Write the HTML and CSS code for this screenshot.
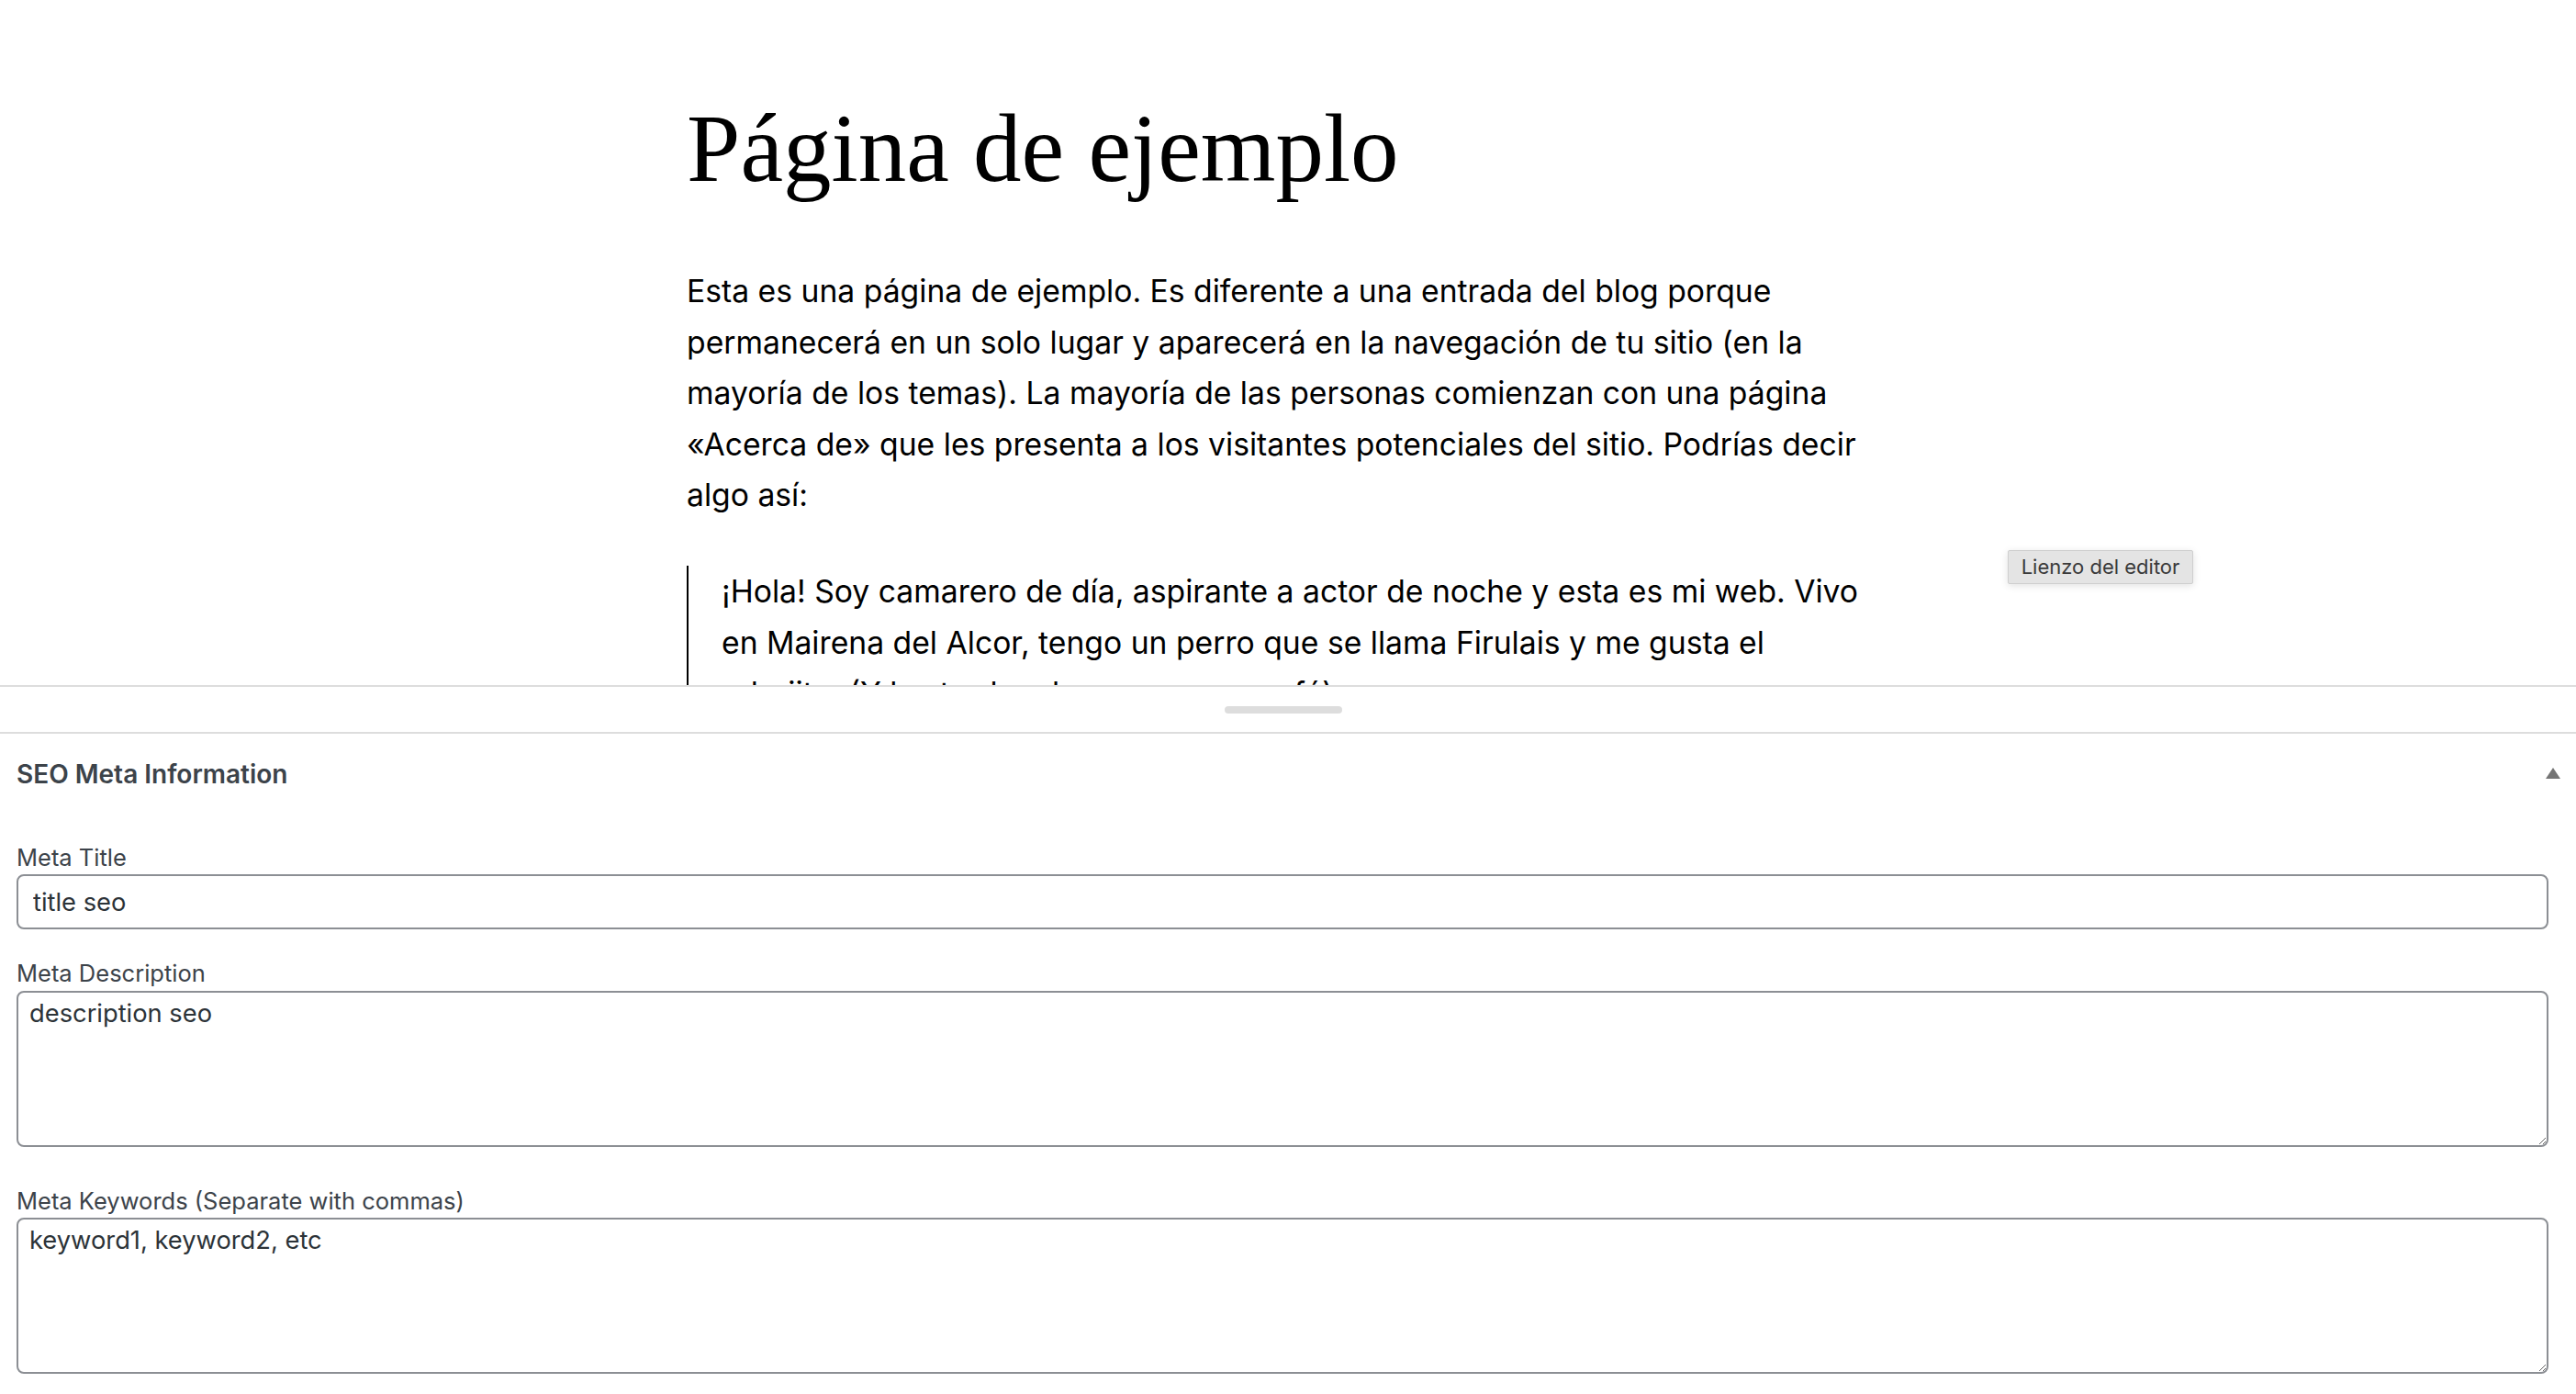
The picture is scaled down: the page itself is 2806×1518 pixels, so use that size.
FILE: index.html
```html
<!DOCTYPE html>
<html lang="es">
<head>
<meta charset="utf-8">
<title>Página de ejemplo</title>
<link rel="stylesheet" href="styles.css">
</head>
<body>
<div class="editor-canvas">
  <article class="post">
    <h1 class="post-title">Página de ejemplo</h1>
    <p class="post-text">Esta es una página de ejemplo. Es diferente a una entrada del blog porque permanecerá en un solo lugar y aparecerá en la navegación de tu sitio (en la mayoría de los temas). La mayoría de las personas comienzan con una página «Acerca de» que les presenta a los visitantes potenciales del sitio. Podrías decir algo así:</p>
    <blockquote class="post-quote">
      <p>¡Hola! Soy camarero de día, aspirante a actor de noche y esta es mi web. Vivo en Mairena del Alcor, tengo un perro que se llama Firulais y me gusta el rebujito. (Y las tardes de verano con café)</p>
    </blockquote>
  </article>
  <div class="tooltip">Lienzo del editor</div>
</div>
<div class="resize-bar"><span class="resize-handle"></span></div>
<section class="metabox">
  <div class="metabox-header">
    <h2 class="metabox-title">SEO Meta Information</h2>
    <span class="toggle-arrow"></span>
  </div>
  <div class="field">
    <label class="field-label" for="meta-title">Meta Title</label>
    <input class="field-input" id="meta-title" type="text" value="title seo">
  </div>
  <div class="field field-area">
    <label class="field-label" for="meta-desc">Meta Description</label>
    <textarea class="field-textarea" id="meta-desc">description seo</textarea>
  </div>
  <div class="field field-area">
    <label class="field-label" for="meta-keys">Meta Keywords (Separate with commas)</label>
    <textarea class="field-textarea" id="meta-keys">keyword1, keyword2, etc</textarea>
  </div>
</section>
</body>
</html>
```
FILE: styles.css
```css
* { box-sizing: border-box; }

html, body {
  margin: 0;
  padding: 0;
  background: #fff;
}

body {
  width: 2806px;
  height: 1518px;
  overflow: hidden;
  font-family: Inter, "Liberation Sans", sans-serif;
}

.editor-canvas {
  position: relative;
  height: 746px;
  overflow: hidden;
  padding-right: 10px;
}

.post {
  width: 1300px;
  margin: 0 auto;
  padding-top: 99px;
  color: #000;
}

.post-title {
  margin: 0;
  font-family: "Liberation Serif", serif;
  font-weight: 400;
  font-size: 105px;
  line-height: 126px;
}

.post-text {
  margin: 64px 0 0;
  font-size: 33.7px;
  line-height: 55.6px;
}

.post-quote {
  margin: 49px 0 0;
  padding-left: 36px;
  border-left: 2px solid #000;
}

.post-quote p {
  margin: 0;
  font-size: 33.7px;
  line-height: 55.6px;
}

.tooltip {
  position: absolute;
  left: 2187px;
  top: 599px;
  width: 202px;
  height: 37px;
  background: #e4e4e4;
  border: 1px solid #cfcfcf;
  border-radius: 2px;
  box-shadow: 0 2px 8px rgba(0, 0, 0, 0.12);
  color: #3a3a3a;
  font-size: 22px;
  line-height: 35px;
  text-align: center;
}

.resize-bar {
  display: flex;
  justify-content: center;
  align-items: center;
  height: 53px;
  padding-right: 10px;
  border-top: 2px solid #dddddd;
  border-bottom: 2px solid #dddddd;
}

.resize-handle {
  width: 128px;
  height: 8px;
  border-radius: 4px;
  background: #dddddd;
}

.metabox {
  padding: 0 30px 0 18px;
  color: #3c434a;
}

.metabox-header {
  display: flex;
  justify-content: space-between;
  align-items: center;
  padding-top: 25px;
  margin-right: -13px;
}

.metabox-title {
  margin: 0;
  font-size: 28px;
  font-weight: 600;
  line-height: 39px;
  color: #3c434a;
}

.toggle-arrow {
  width: 0;
  height: 0;
  border-left: 8px solid transparent;
  border-right: 8px solid transparent;
  border-bottom: 12px solid #757575;
  margin-top: -4px;
}

.field {
  margin-top: 53px;
}

.field + .field {
  margin-top: 30px;
}

.field-area + .field-area {
  margin-top: 41px;
}

.field-label {
  display: block;
  font-size: 25.5px;
  line-height: 36.4px;
  color: #3c434a;
}

.field-input,
.field-textarea {
  display: block;
  width: 100%;
  margin: 0;
  border: 2px solid #8c8f94;
  border-radius: 8px;
  background: #fff;
  color: #2c3338;
  font-family: Inter, "Liberation Sans", sans-serif;
  font-size: 27.3px;
  outline: none;
}

.field-input {
  height: 60px;
  padding: 0 16px;
  line-height: 56px;
}

.field-textarea {
  height: 170px;
  padding: 6px 12px 4px;
  line-height: 34px;
  resize: vertical;
}
```
